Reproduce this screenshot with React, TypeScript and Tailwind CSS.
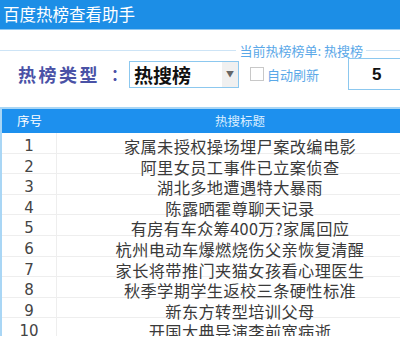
import React from "react";

const rows = [
  "家属未授权操场埋尸案改编电影",
  "阿里女员工事件已立案侦查",
  "湖北多地遭遇特大暴雨",
  "陈露晒霍尊聊天记录",
  "有房有车众筹400万?家属回应",
  "杭州电动车爆燃烧伤父亲恢复清醒",
  "家长将带推门夹猫女孩看心理医生",
  "秋季学期学生返校三条硬性标准",
  "新东方转型培训父母",
  "开国大典导演李前宽病逝",
];

const cjk = { fontFamily: '"Noto Sans CJK SC", "Noto Sans", sans-serif' };

export default function App() {
  return (
    <div className="w-[400px] h-[347px] overflow-hidden bg-white whitespace-nowrap" style={cjk}>
      <div className="h-[30px] bg-[#1c8ee6] border-b border-[#8ec8f2] flex items-center pl-[3px] text-white text-[16.5px] leading-none">
        百度热榜查看助手
      </div>
      <div className="mt-[13px] h-[14px] flex items-center">
        <div className="flex-1 h-px bg-[#cde4f6]" />
        <span className="px-[3px] text-[13px] leading-none text-[#5aa8e8]">当前热榜榜单: 热搜榜</span>
        <div className="w-[34px] h-px bg-[#cde4f6]" />
      </div>
      <div className="mt-[1px] h-[32px] flex items-center">
        <span className="shrink-0 ml-[18px] text-[18px] font-bold tracking-[2.5px] text-[#4a52a6] leading-none">热榜类型</span>
        <span className="shrink-0 ml-[11px] text-[16px] font-bold text-[#4a52a6] leading-none">：</span>
        <div className="shrink-0 ml-[2px] w-[110px] h-[27px] border border-[#8cc8ef] flex items-stretch">
          <span className="flex-1 flex items-center pl-[4px] text-[19px] font-bold text-[#111] leading-none">热搜榜</span>
          <span className="w-[16px] bg-[#f0f0f0] flex items-center justify-center text-[8px] text-[#666]">▼</span>
        </div>
        <div className="shrink-0 ml-[11px] w-[14px] h-[14px] border border-[#c8c8c8] bg-white" />
        <span className="shrink-0 ml-[3px] text-[13px] text-[#5aa8e8] leading-none">自动刷新</span>
        <div className="shrink-0 ml-[29px] w-[70px] h-[32px] border border-[#8cc8ef] flex items-center justify-start pl-[23px] text-[17px] font-bold text-[#111] leading-none" style={{ fontFamily: '"Liberation Sans", Arial, sans-serif' }}>
          5
        </div>
      </div>
      <div className="mt-[17px] w-[423px] h-[229px] overflow-hidden border-t-2 border-l-[2px] border-[#a9d6f5]">
        <div className="h-[24px] bg-[#1d90ee] flex items-center text-white text-[12.5px] leading-none">
          <span className="w-[55px] pl-[15px]">序号</span>
          <span className="flex-1 text-center text-[#dbeeff]">热搜标题</span>
        </div>
        {rows.map((t, i) => (
          <div key={i} className="h-[20.6px] flex items-stretch border-b border-[#eeeeee]">
            <span
              className="w-[55px] border-r border-[#eeeeee] pt-[5px] text-center text-[15px] text-[#444] leading-[16px]"
              style={{ fontFamily: '"DejaVu Sans", "Liberation Sans", sans-serif' }}
            >
              {i + 1}
            </span>
            <span className="flex-1 pt-[5px] text-center text-[16.2px] text-[#3a3a3a] leading-[16px] tracking-[0.4px]">
              {t}
            </span>
          </div>
        ))}
      </div>
    </div>
  );
}
